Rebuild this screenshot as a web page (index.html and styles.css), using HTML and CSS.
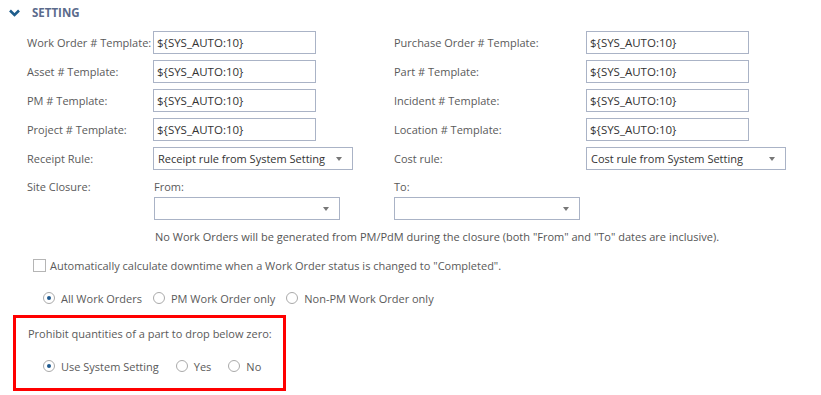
FILE: index.html
```html
<!DOCTYPE html>
<html lang="en">
<head>
  <meta charset="UTF-8" />
  <title>Setting</title>
  <link rel="stylesheet" href="styles.css">
</head>
<body>

  <!-- Section header -->
  <div class="section-head">
    <svg class="chevron" width="11" height="8" viewBox="0 0 11 8">
      <path d="M1 1.5 L5.5 6 L10 1.5" fill="none" stroke="#1e5d8c" stroke-width="2.6" />
    </svg>
    <span>SETTING</span>
  </div>

  <!-- Templates and rules -->
  <div class="grid">
    <label>Work Order # Template:</label>
    <div><input class="text-box" type="text" value="${SYS_AUTO:10}"></div>
    <label>Purchase Order # Template:</label>
    <div><input class="text-box" type="text" value="${SYS_AUTO:10}"></div>

    <label>Asset # Template:</label>
    <div><input class="text-box" type="text" value="${SYS_AUTO:10}"></div>
    <label>Part # Template:</label>
    <div><input class="text-box" type="text" value="${SYS_AUTO:10}"></div>

    <label>PM # Template:</label>
    <div><input class="text-box" type="text" value="${SYS_AUTO:10}"></div>
    <label>Incident # Template:</label>
    <div><input class="text-box" type="text" value="${SYS_AUTO:10}"></div>

    <label>Project # Template:</label>
    <div><input class="text-box" type="text" value="${SYS_AUTO:10}"></div>
    <label>Location # Template:</label>
    <div><input class="text-box" type="text" value="${SYS_AUTO:10}"></div>

    <label>Receipt Rule:</label>
    <div class="select wide"><span>Receipt rule from System Setting</span><i class="caret"></i></div>
    <label>Cost rule:</label>
    <div class="select wide"><span>Cost rule from System Setting</span><i class="caret"></i></div>
  </div>

  <!-- Site closure -->
  <div class="closure">
    <label class="closure-label">Site Closure:</label>
    <div class="closure-field from">
      <label>From:</label>
      <div class="select date"><span></span><i class="caret"></i></div>
    </div>
    <div class="closure-field">
      <label>To:</label>
      <div class="select date"><span></span><i class="caret"></i></div>
    </div>
  </div>
  <p class="closure-note">No Work Orders will be generated from PM/PdM during the closure (both "From" and "To" dates are inclusive).</p>

  <div class="check-row">
    <span class="checkbox"></span>
    <span>Automatically calculate downtime when a Work Order status is changed to "Completed".</span>
  </div>

  <div class="radio-row outer">
    <span class="radio checked"></span><span class="radio-text">All Work Orders</span>
    <span class="radio"></span><span class="radio-text">PM Work Order only</span>
    <span class="radio"></span><span class="radio-text">Non-PM Work Order only</span>
  </div>

  <!-- Highlighted option -->
  <div class="highlight">
    <p class="highlight-title">Prohibit quantities of a part to drop below zero:</p>
    <div class="radio-row inner">
      <span class="radio checked"></span><span class="radio-text">Use System Setting</span>
      <span class="radio"></span><span class="radio-text">Yes</span>
      <span class="radio"></span><span class="radio-text">No</span>
    </div>
  </div>

</body>
</html>
```

FILE: styles.css
```css
body {
  font-family: 'Open Sans', sans-serif;
  font-size: 11px;
  color: #5a5a5a;
  background: #fff;
  margin: 0;
  padding: 0;
  white-space: nowrap;
}
label {
  display: flex;
  align-items: center;
  height: 23px;
}
.section-head {
  display: flex;
  align-items: center;
  height: 24px;
  padding-left: 9px;
  gap: 12px;
}
.section-head span {
  font-weight: 700;
  font-size: 11.5px;
  color: #5b6b8c;
}
.chevron {
  display: block;
  margin-top: 1px;
}
.grid {
  display: grid;
  grid-template-columns: 126px 241px 192px auto;
  grid-auto-rows: 23px;
  row-gap: 6px;
  margin: 7px 0 0 27px;
}
.text-box {
  box-sizing: border-box;
  width: 163px;
  height: 23px;
  margin: 0;
  padding: 0 3px;
  border: 1px solid #aab3c6;
  font-family: inherit;
  font-size: 11.5px;
  color: #333;
  outline: none;
}
.select {
  box-sizing: border-box;
  display: flex;
  align-items: center;
  justify-content: space-between;
  height: 23px;
  padding: 0 10px 0 4px;
  border: 1px solid #aab3c6;
  font-size: 11px;
  color: #333;
  background: #fff;
}
.select.wide {
  width: 200px;
}
.select.date {
  width: 186px;
}
.caret {
  width: 0;
  height: 0;
  border-left: 3.5px solid transparent;
  border-right: 3.5px solid transparent;
  border-top: 4px solid #777;
}
.closure {
  display: grid;
  grid-template-columns: 127px 240px auto;
  margin: 7px 0 0 27px;
}
.closure-label {
  height: 18px;
}
.closure-field label {
  height: 18px;
  margin-bottom: 2px;
}
.closure-note {
  margin: 8px 0 0 155px;
  line-height: 18px;
  color: #555;
}
.check-row {
  display: flex;
  align-items: center;
  gap: 4px;
  margin: 10px 0 0 33px;
  height: 18px;
}
.checkbox {
  box-sizing: border-box;
  width: 13px;
  height: 13px;
  border: 1px solid #b5b5b5;
  background: #fff;
}
.radio-row {
  display: flex;
  align-items: center;
  height: 18px;
  margin: 15px 0 0 43px;
}
.radio {
  box-sizing: border-box;
  position: relative;
  width: 12px;
  height: 12px;
  border: 1px solid #aaa;
  border-radius: 50%;
  margin-right: 6px;
}
.radio.checked::after {
  content: "";
  position: absolute;
  left: 3px;
  top: 3px;
  width: 4px;
  height: 4px;
  border-radius: 50%;
  background: #1f5a8f;
}
.radio-text {
  margin-right: 16px;
}
.outer .radio-text {
  margin-right: 11px;
}
.highlight {
  box-sizing: border-box;
  width: 273px;
  height: 76px;
  margin: 8px 0 0 13px;
  border: 3px solid #f00;
  padding: 7px 0 0 12px;
}
.highlight-title {
  margin: 0;
  line-height: 18px;
}
.radio-row.inner {
  margin: 14px 0 0 15px;
}
.inner .radio-text {
  margin-right: 17px;
}
```
